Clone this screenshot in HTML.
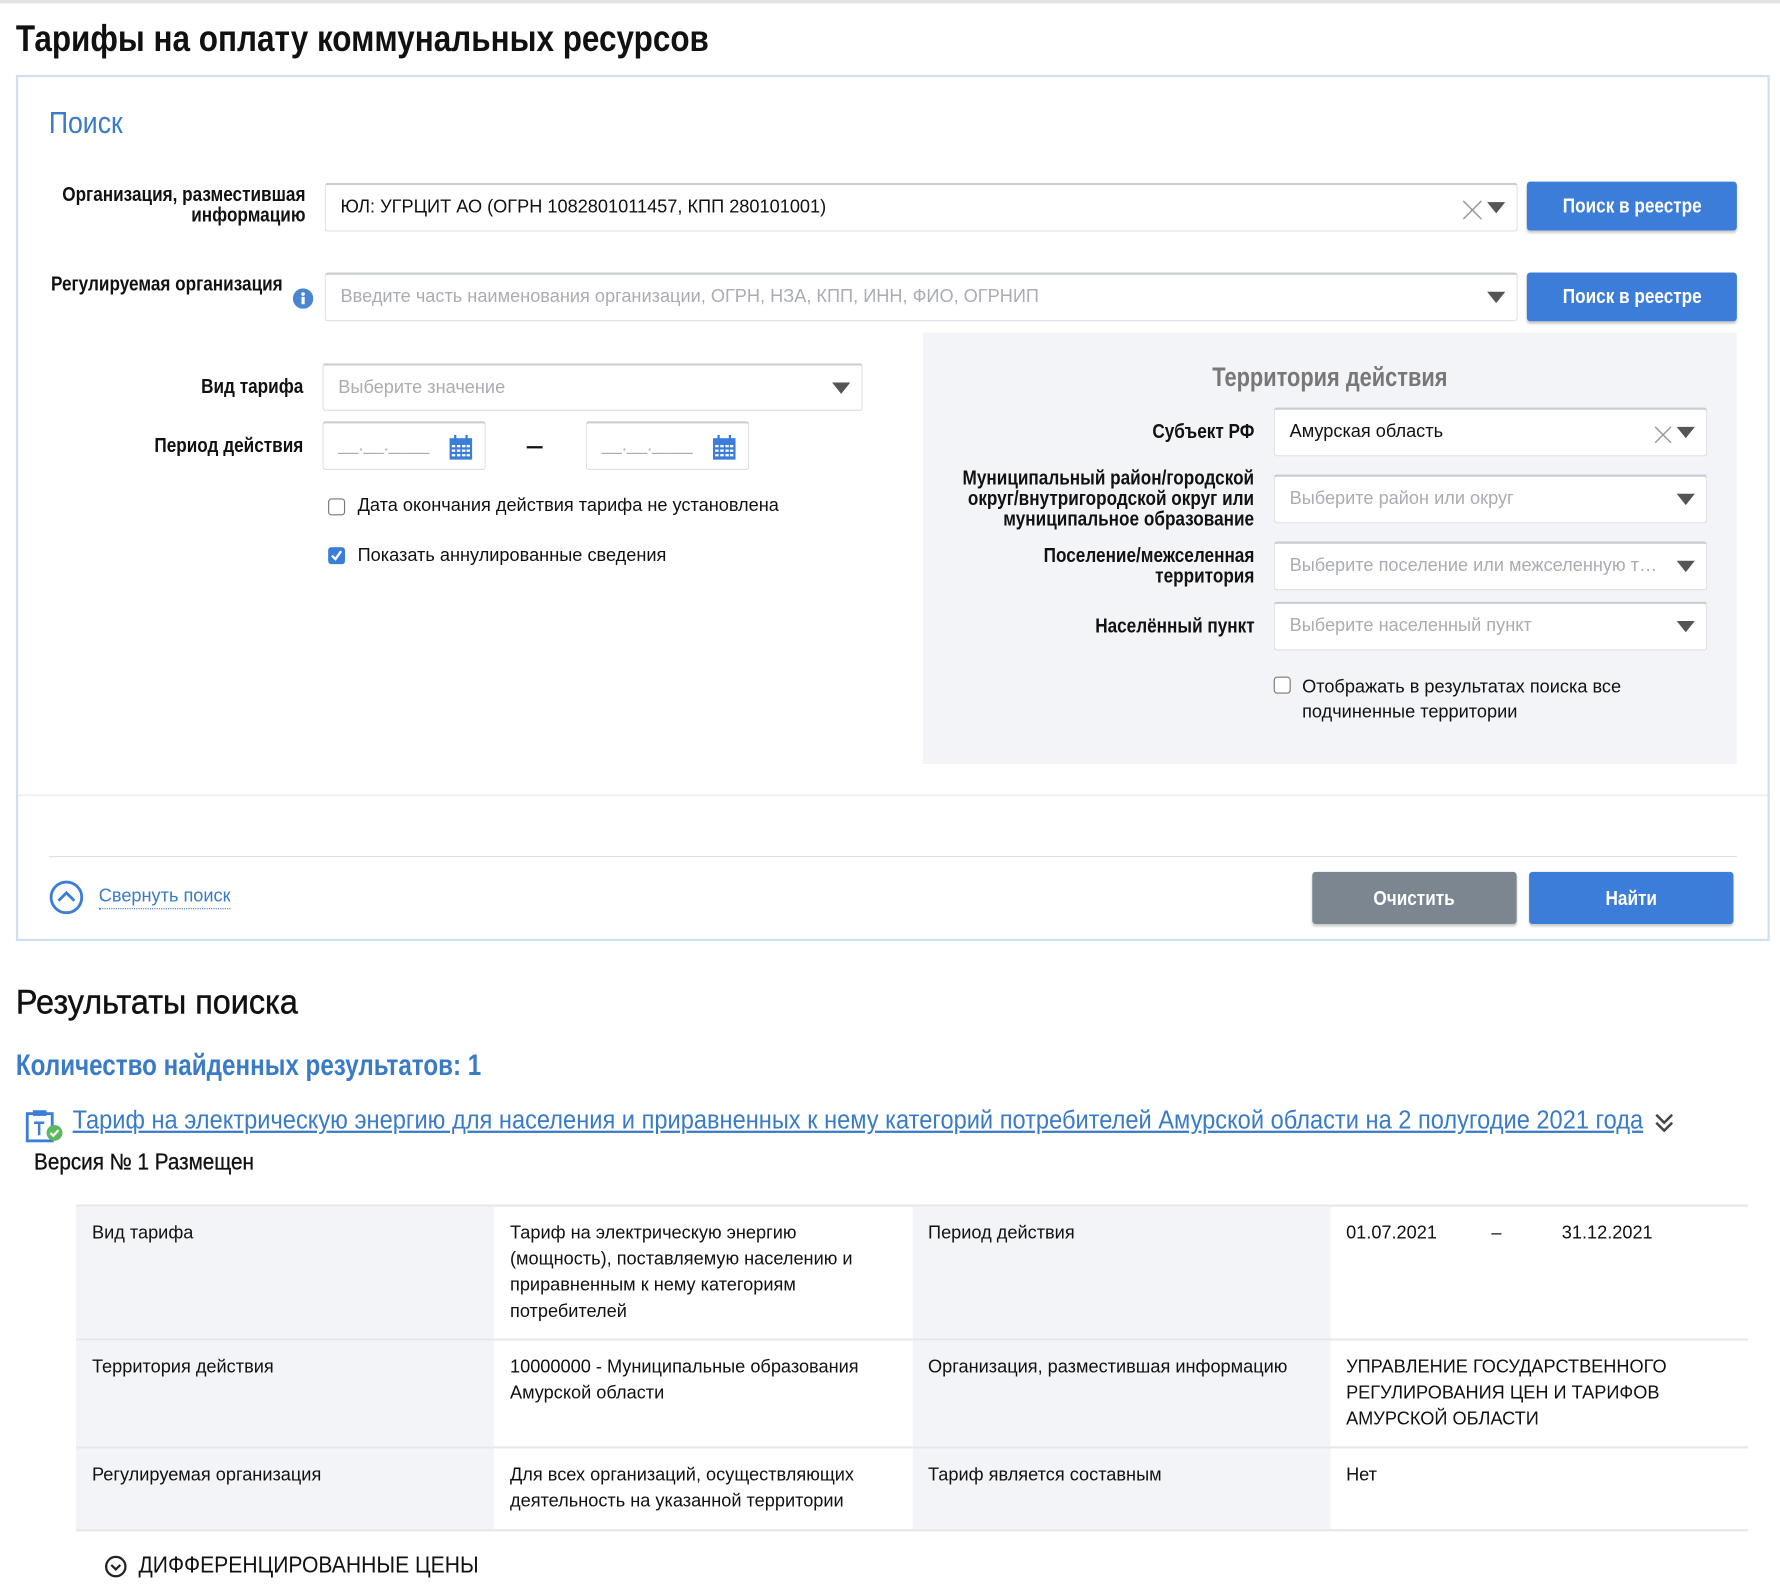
<!DOCTYPE html>
<html><head><meta charset="utf-8">
<style>
html,body{margin:0;padding:0;background:#fff;overflow:hidden;width:1780px;height:1588px}
#w{position:absolute;left:0;top:0;width:1568px;height:1399px;transform:scale(1.13520);transform-origin:0 0;font-family:"Liberation Sans",sans-serif;color:#111}
.a{position:absolute;white-space:nowrap}
.cl{transform-origin:0 50%}
.cr{transform-origin:100% 50%}
.lbl{font-size:18px;font-weight:bold;text-align:right;line-height:18px;color:#111;transform:scaleX(.84);transform-origin:100% 50%}
.inp{position:absolute;border:1px solid #dcdfe4;border-top:2px solid #c9ccd1;border-radius:3px;background:#fff;box-sizing:border-box;font-size:16px}
.inp span{position:absolute;left:13px;top:50%;transform:translateY(-50%);white-space:nowrap}
.ph{color:#a9adb3}
.arr{position:absolute;right:10px;top:50%;margin-top:-5px;width:0;height:0;border-left:8px solid transparent;border-right:8px solid transparent;border-top:10px solid #555}
.btn{position:absolute;background:#3b7dd8;color:#fff;border-radius:3px;font-weight:bold;font-size:18px;display:flex;align-items:center;justify-content:center;box-shadow:0 2px 2px rgba(0,0,0,.2)}
.btn b{display:inline-block;transform:scaleX(.84)}
.cb{position:absolute;width:15px;height:15px;border:1px solid #777;border-radius:3px;background:#fff;box-sizing:border-box}
.t{position:absolute;font-size:16px;white-space:nowrap}
table{position:absolute;left:67px;top:1061px;border-collapse:collapse;font-size:16px;line-height:23px;table-layout:fixed;width:1473px}
td{width:340px;vertical-align:top;padding:12px 14px 0;border-top:2px solid #e6e8ec;border-bottom:2px solid #e6e8ec;position:relative;box-sizing:border-box}
td.g{background:#f3f4f8}
</style></head><body><div id="w">
<div class="a" style="left:0;top:0;width:1568px;height:3px;background:#e4e4e4"></div>
<div class="a cl" style="left:14px;top:15px;font-size:33px;font-weight:bold;transform:scaleX(.84)">Тарифы на оплату коммунальных ресурсов</div>

<div class="a" style="left:14px;top:66px;width:1545px;height:763px;border:2px solid #cfe0f3;box-sizing:border-box"></div>
<div class="a cl" style="left:43px;top:93px;font-size:27px;color:#3a7bc8;transform:scaleX(.87)">Поиск</div>

<div class="a lbl" style="right:1299px;top:162px;">Организация, разместившая<br>информацию</div>
<div class="inp" style="left:286px;top:161px;width:1051px;height:43px"><span>ЮЛ: УГРЦИТ АО (ОГРН 1082801011457, КПП 280101001)</span>
<svg style="position:absolute;right:30px;top:13px" width="18" height="18"><path d="M1 1L17 17M17 1L1 17" stroke="#999" stroke-width="1.3"/></svg><div class="arr"></div></div>
<div class="btn" style="left:1345px;top:160px;width:185px;height:43px"><b>Поиск в реестре</b></div>

<div class="a lbl" style="right:1319px;top:241px;">Регулируемая организация</div>
<svg class="a" style="left:258px;top:254px" width="18" height="18"><circle cx="9" cy="9" r="9" fill="#4a86d0"/><circle cx="9" cy="5" r="1.6" fill="#fff"/><rect x="7.6" y="7.5" width="2.8" height="6.5" fill="#fff"/></svg>
<div class="inp" style="left:286px;top:240px;width:1051px;height:43px"><span class="ph">Введите часть наименования организации, ОГРН, НЗА, КПП, ИНН, ФИО, ОГРНИП</span><div class="arr"></div></div>
<div class="btn" style="left:1345px;top:240px;width:185px;height:43px"><b>Поиск в реестре</b></div>

<div class="a lbl" style="right:1301px;top:331px;">Вид тарифа</div>
<div class="inp" style="left:284px;top:320px;width:476px;height:42px"><span class="ph">Выберите значение</span><div class="arr"></div></div>
<div class="a lbl" style="right:1301px;top:383px;">Период действия</div>
<div class="inp" style="left:284px;top:371px;width:144px;height:43px"><span class="ph">__.__.____</span>
<svg style="position:absolute;left:111px;top:10px" width="20" height="22"><rect x="0" y="3" width="20" height="19" fill="#3b7dd8"/><rect x="4" y="0" width="2" height="5" fill="#3b7dd8"/><rect x="14" y="0" width="2" height="5" fill="#3b7dd8"/><g fill="#fff"><rect x="2" y="9" width="3" height="2"/><rect x="6.5" y="9" width="3" height="2"/><rect x="11" y="9" width="3" height="2"/><rect x="15" y="9" width="3" height="2"/><rect x="2" y="13" width="3" height="2"/><rect x="6.5" y="13" width="3" height="2"/><rect x="11" y="13" width="3" height="2"/><rect x="15" y="13" width="3" height="2"/><rect x="2" y="17" width="3" height="2"/><rect x="6.5" y="17" width="3" height="2"/><rect x="11" y="17" width="3" height="2"/><rect x="15" y="17" width="3" height="2"/></g></svg></div>
<div class="a" style="left:464px;top:393px;width:14px;height:2px;background:#111"></div>
<div class="inp" style="left:516px;top:371px;width:144px;height:43px"><span class="ph">__.__.____</span>
<svg style="position:absolute;left:111px;top:10px" width="20" height="22"><rect x="0" y="3" width="20" height="19" fill="#3b7dd8"/><rect x="4" y="0" width="2" height="5" fill="#3b7dd8"/><rect x="14" y="0" width="2" height="5" fill="#3b7dd8"/><g fill="#fff"><rect x="2" y="9" width="3" height="2"/><rect x="6.5" y="9" width="3" height="2"/><rect x="11" y="9" width="3" height="2"/><rect x="15" y="9" width="3" height="2"/><rect x="2" y="13" width="3" height="2"/><rect x="6.5" y="13" width="3" height="2"/><rect x="11" y="13" width="3" height="2"/><rect x="15" y="13" width="3" height="2"/><rect x="2" y="17" width="3" height="2"/><rect x="6.5" y="17" width="3" height="2"/><rect x="11" y="17" width="3" height="2"/><rect x="15" y="17" width="3" height="2"/></g></svg></div>

<div class="cb" style="left:289px;top:439px"></div>
<div class="t" style="left:315px;top:437px">Дата окончания действия тарифа не установлена</div>
<svg class="a" style="left:289px;top:482px" width="15" height="15"><rect width="15" height="15" rx="3" fill="#3b7dd8"/><path d="M3.5 7.5L6.5 10.5L11.5 3.5" stroke="#fff" stroke-width="2" fill="none"/></svg>
<div class="t" style="left:315px;top:481px">Показать аннулированные сведения</div>

<div class="a" style="left:813px;top:293px;width:717px;height:380px;background:#f3f4f8"></div>
<div class="a" style="left:813px;width:717px;text-align:center;top:319px;font-size:24px;font-weight:bold;color:#777;transform:scaleX(.8);transform-origin:50% 50%">Территория действия</div>
<div class="a lbl" style="right:463px;top:371px;">Субъект РФ</div>
<div class="inp" style="left:1122px;top:359px;width:382px;height:43px"><span>Амурская область</span>
<svg style="position:absolute;right:30px;top:14px" width="16" height="16"><path d="M1 1L15 15M15 1L1 15" stroke="#999" stroke-width="1.3"/></svg><div class="arr"></div></div>
<div class="a lbl" style="right:463px;top:412px;">Муниципальный район/городской<br>округ/внутригородской округ или<br>муниципальное образование</div>
<div class="inp" style="left:1122px;top:418px;width:382px;height:43px"><span class="ph">Выберите район или округ</span><div class="arr"></div></div>
<div class="a lbl" style="right:463px;top:480px;">Поселение/межселенная<br>территория</div>
<div class="inp" style="left:1122px;top:477px;width:382px;height:43px"><span class="ph">Выберите поселение или межселенную т…</span><div class="arr"></div></div>
<div class="a lbl" style="right:463px;top:542px;">Населённый пункт</div>
<div class="inp" style="left:1122px;top:530px;width:382px;height:43px"><span class="ph">Выберите населенный пункт</span><div class="arr"></div></div>
<div class="cb" style="left:1122px;top:596px"></div>
<div class="t" style="left:1147px;top:595px;line-height:22px">Отображать в результатах поиска все<br>подчиненные территории</div>

<div class="a" style="left:16px;top:700px;width:1542px;height:1px;background:#e4e6ea"></div>
<div class="a" style="left:43px;top:754px;width:1487px;height:1px;background:#dfe1e5"></div>
<svg class="a" style="left:43px;top:775px" width="31" height="31"><circle cx="15.5" cy="15.5" r="13.5" fill="none" stroke="#3b7dd8" stroke-width="2.5"/><path d="M8.5 18.5L15.5 11.5L22.5 18.5" fill="none" stroke="#3b7dd8" stroke-width="2.5"/></svg>
<div class="t" style="left:87px;top:780px;color:#3a7bc8;border-bottom:1px dotted #3a7bc8;line-height:20px">Свернуть поиск</div>
<div class="btn" style="left:1156px;top:768px;width:180px;height:46px;background:#7b8690"><b>Очистить</b></div>
<div class="btn" style="left:1347px;top:768px;width:180px;height:46px"><b>Найти</b></div>

<div class="a cl" style="left:14px;top:867px;font-size:30px;transform:scaleX(.95);-webkit-text-stroke:0.4px #111">Результаты поиска</div>
<div class="a cl" style="left:14px;top:923px;font-size:26px;color:#3a7bc8;font-weight:bold;transform:scaleX(.82)">Количество найденных результатов: 1</div>
<svg class="a" style="left:22px;top:977px" width="34" height="30"><rect x="2" y="4" width="22" height="24" fill="none" stroke="#3b7dd8" stroke-width="2.5"/><rect x="7" y="1" width="12" height="5" fill="#3b7dd8"/><path d="M8 12H17M12.5 12V23" stroke="#3b7dd8" stroke-width="2.2"/><circle cx="26" cy="21" r="7" fill="#5cb85c"/><path d="M22.5 21L25 23.5L29.5 18.5" stroke="#fff" stroke-width="2" fill="none"/></svg>
<div class="a cl" style="left:64px;top:973px;font-size:23px;color:#3a7bc8;text-decoration:underline;transform:scaleX(.905)">Тариф на электрическую энергию для населения и приравненных к нему категорий потребителей Амурской области на 2 полугодие 2021 года</div>
<svg class="a" style="left:1457px;top:979px" width="18" height="20"><path d="M2 3L9 10L16 3M2 10L9 17L16 10" fill="none" stroke="#444" stroke-width="2.2"/></svg>
<div class="a cl" style="left:30px;top:1013px;font-size:20px;transform:scaleX(.91);-webkit-text-stroke:0.3px #111">Версия № 1 Размещен</div>

<table><tr style="height:118px"><td class="g">Вид тарифа</td><td>Тариф на электрическую энергию (мощность), поставляемую населению и приравненным к нему категориям потребителей</td><td class="g">Период действия</td><td><span>01.07.2021</span><span style="position:absolute;left:142px;top:12px">–</span><span style="position:absolute;left:204px;top:12px">31.12.2021</span></td></tr>
<tr style="height:95px"><td class="g">Территория действия</td><td>10000000 - Муниципальные образования Амурской области</td><td class="g">Организация, разместившая информацию</td><td>УПРАВЛЕНИЕ ГОСУДАРСТВЕННОГО РЕГУЛИРОВАНИЯ ЦЕН И ТАРИФОВ АМУРСКОЙ ОБЛАСТИ</td></tr>
<tr style="height:73px"><td class="g">Регулируемая организация</td><td>Для всех организаций, осуществляющих деятельность на указанной территории</td><td class="g">Тариф является составным</td><td>Нет</td></tr></table>

<svg class="a" style="left:92px;top:1370px" width="20" height="20"><circle cx="10" cy="10" r="8.5" fill="none" stroke="#222" stroke-width="2"/><path d="M6 8.5L10 12.5L14 8.5" fill="none" stroke="#222" stroke-width="2"/></svg>
<div class="a cl" style="left:122px;top:1368px;font-size:20px;transform:scaleX(.93)">ДИФФЕРЕНЦИРОВАННЫЕ ЦЕНЫ</div>
</div></body></html>
